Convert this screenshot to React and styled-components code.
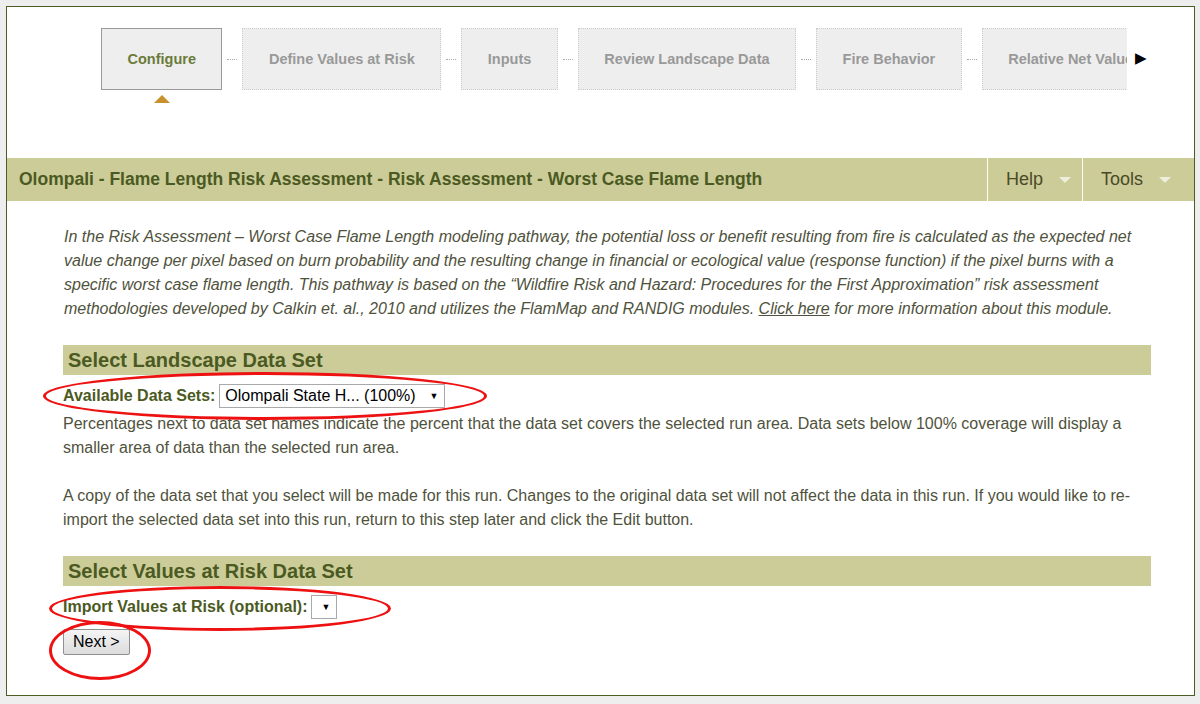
import styled, { createGlobalStyle } from 'styled-components';

const GlobalStyle = createGlobalStyle`
  html, body {
    margin: 0;
    padding: 0;
    background: #eeeeee;
    font-family: "Liberation Sans", Arial, sans-serif;
  }
  #root {
    padding: 6px 5px 6px 6px;
  }
`;

const steps = [
  'Configure',
  'Define Values at Risk',
  'Inputs',
  'Review Landscape Data',
  'Fire Behavior',
  'Relative Net Value',
];

const App = () => {
  return (
    <>
      <GlobalStyle />
      <Panel>
        <StepsArea>
          <StepsTrack>
            {steps.map((label, i) => (
              <StepItem key={label}>
                {i > 0 && <Connector />}
                <Step active={i === 0}>{label}</Step>
              </StepItem>
            ))}
          </StepsTrack>
          <MoreArrow>&#9654;</MoreArrow>
        </StepsArea>

        <TitleBar>
          <Title>Olompali - Flame Length Risk Assessment - Risk Assessment - Worst Case Flame Length</Title>
          <MenuCell width="95px">Help<Caret /></MenuCell>
          <MenuCell width="112px">Tools<Caret /></MenuCell>
        </TitleBar>

        <Content>
          <Intro>
            In the Risk Assessment – Worst Case Flame Length modeling pathway, the potential loss or benefit resulting
            from fire is calculated as the expected net value change per pixel based on burn probability and the resulting
            change in financial or ecological value (response function) if the pixel burns with a specific worst case
            flame length. This pathway is based on the “Wildfire Risk and Hazard: Procedures for the First Approximation”
            risk assessment methodologies developed by Calkin et. al., 2010 and utilizes the FlamMap and RANDIG modules.{' '}
            <a href="#more">Click here</a> for more information about this module.
          </Intro>

          <SectionHeader>Select Landscape Data Set</SectionHeader>
          <FieldRow>
            <Label>Available Data Sets:</Label>
            <FakeSelect width="226px">
              <span>Olompali State H... (100%)</span>
              <SelectArrow>&#9660;</SelectArrow>
            </FakeSelect>
            <Ellipse style={{ left: -20, top: -12, width: 444, height: 48 }} />
          </FieldRow>
          <Body>
            Percentages next to data set names indicate the percent that the data set covers the selected run area.
            Data sets below 100% coverage will display a smaller area of data than the selected run area.
          </Body>
          <Body gap>
            A copy of the data set that you select will be made for this run. Changes to the original data set will not
            affect the data in this run. If you would like to re-import the selected data set into this run, return to
            this step later and click the Edit button.
          </Body>

          <SectionHeader top="24px">Select Values at Risk Data Set</SectionHeader>
          <FieldRow>
            <Label>Import Values at Risk (optional):</Label>
            <FakeSelect width="26px">
              <SelectArrow>&#9660;</SelectArrow>
            </FakeSelect>
            <Ellipse style={{ left: -14, top: -9, width: 342, height: 45 }} />
          </FieldRow>
          <ButtonRow>
            <NextButton>Next &gt;</NextButton>
            <Ellipse style={{ left: -14, top: -8, width: 102, height: 59 }} />
          </ButtonRow>
        </Content>
      </Panel>
    </>
  );
};

const Panel = styled.div`
  border: 1px solid #4b5c24;
  background: #fff;
  height: 690px;
  box-sizing: border-box;
`;

const StepsArea = styled.div`
  display: flex;
  align-items: flex-start;
  padding: 21px 0 0 94px;
  height: 151px;
  box-sizing: border-box;
`;

const StepsTrack = styled.div`
  display: flex;
  width: 1026px;
  overflow: hidden;
  padding-bottom: 20px;
`;

const StepItem = styled.div`
  display: flex;
  align-items: center;
  flex-shrink: 0;
`;

const Connector = styled.span`
  width: 10px;
  margin: 0 5px;
  border-top: 1px dotted #aaa;
`;

const Step = styled.div`
  position: relative;
  height: 62px;
  box-sizing: border-box;
  display: flex;
  align-items: center;
  padding: 0 25.5px;
  background: #eeeeee;
  border: 1px ${({ active }) => (active ? 'solid #999' : 'dotted #ccc')};
  color: ${({ active }) => (active ? '#6b7b3a' : '#999')};
  font-size: 14.5px;
  font-weight: bold;
  white-space: nowrap;

  &::after {
    content: '';
    display: ${({ active }) => (active ? 'block' : 'none')};
    position: absolute;
    left: 50%;
    margin-left: -8px;
    bottom: -14px;
    border-left: 8px solid transparent;
    border-right: 8px solid transparent;
    border-bottom: 8px solid #c8912b;
  }
`;

const MoreArrow = styled.div`
  margin: 21px 0 0 8px;
  font-size: 15px;
  color: #000;
`;

const TitleBar = styled.div`
  display: flex;
  align-items: stretch;
  height: 43px;
  background: #cccc99;
`;

const Title = styled.h1`
  flex: 1;
  margin: 0;
  padding-left: 12px;
  display: flex;
  align-items: center;
  font-size: 17.5px;
  font-weight: bold;
  color: #4b5a22;
`;

const MenuCell = styled.div`
  width: ${({ width }) => width};
  border-left: 1px solid #fff;
  display: flex;
  align-items: center;
  padding-left: 18px;
  box-sizing: border-box;
  font-size: 18px;
  color: #4a4a28;
`;

const Caret = styled.span`
  margin-left: 16px;
  margin-top: 1px;
  border-left: 6px solid transparent;
  border-right: 6px solid transparent;
  border-top: 6px solid #eeeedd;
`;

const Content = styled.div`
  padding: 24px 43px 0 56px;
`;

const Intro = styled.p`
  margin: 0 0 24px 1px;
  font-style: italic;
  font-size: 16px;
  line-height: 24px;
  color: #4f523c;
  padding-right: 14px;

  a {
    color: #4f523c;
  }
`;

const SectionHeader = styled.h2`
  margin: ${({ top }) => top || '0'} 0 0;
  height: 30px;
  line-height: 30px;
  padding-left: 5px;
  background: #cccc99;
  font-size: 20px;
  font-weight: bold;
  color: #4b5a22;
`;

const FieldRow = styled.div`
  position: relative;
  display: flex;
  align-items: center;
  height: 24px;
  margin-top: 9px;
`;

const Label = styled.span`
  font-size: 16px;
  font-weight: bold;
  color: #4b5a22;
  margin-right: 4px;
`;

const FakeSelect = styled.div`
  width: ${({ width }) => width};
  height: 24px;
  box-sizing: border-box;
  border: 1px solid #a9a9a9;
  background: #fff;
  display: flex;
  align-items: center;
  justify-content: flex-end;
  padding: 0 6px 0 5px;
  font-size: 16px;
  color: #000;

  span {
    flex: 1;
  }
`;

const SelectArrow = styled.i`
  font-style: normal;
  font-size: 9px;
  color: #000;
`;

const Body = styled.p`
  margin: ${({ gap }) => (gap ? '24px' : '4px')} 0 0;
  font-size: 16px;
  line-height: 24px;
  color: #4f523c;
`;

const ButtonRow = styled.div`
  position: relative;
  margin-top: 10px;
  display: flex;
`;

const NextButton = styled.button`
  font-family: "Liberation Sans", Arial, sans-serif;
  font-size: 16px;
  height: 26px;
  padding: 0 9px;
  border: 1px solid #8f8f8f;
  border-radius: 2px;
  background: linear-gradient(#f4f4f4, #dcdcdc);
  color: #000;
`;

const Ellipse = styled.span`
  position: absolute;
  border: 3px solid #ee1111;
  border-radius: 50%;
  box-sizing: border-box;
  pointer-events: none;
`;

export default App;
